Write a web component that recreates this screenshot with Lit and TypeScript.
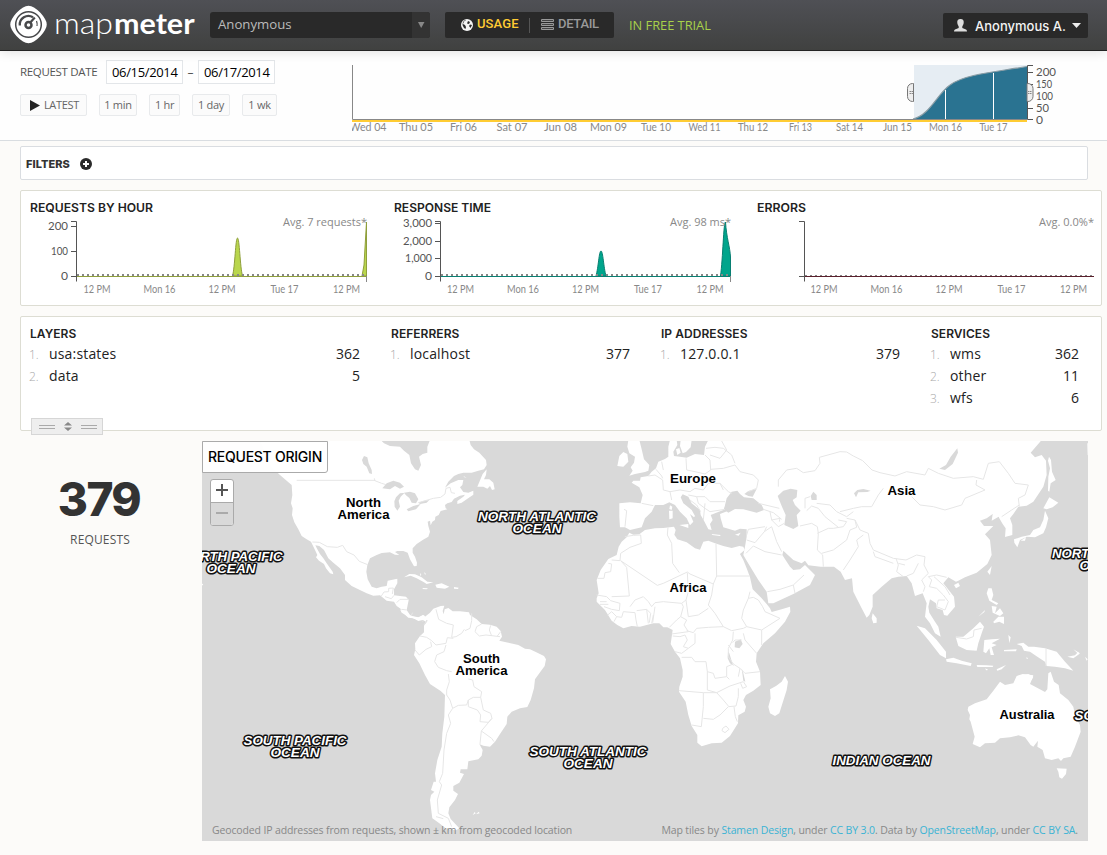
import { LitElement, html, svg, css } from "lit";
import { customElement } from "lit/decorators.js";

interface Tick { at: number; label: string; w: number }
interface Row { name: string; count: number }

const hourTicks: Tick[] = [
  { at: 97, label: "12 PM", w: 27 },
  { at: 159.5, label: "Mon 16", w: 32 },
  { at: 222, label: "12 PM", w: 27 },
  { at: 284.5, label: "Tue 17", w: 28 },
  { at: 346.5, label: "12 PM", w: 27 },
];

const dayTicks: Tick[] = [
  { at: 368, label: "Wed 04", w: 37 }, { at: 416, label: "Thu 05", w: 34 },
  { at: 463.5, label: "Fri 06", w: 27 }, { at: 512, label: "Sat 07", w: 31 },
  { at: 560.5, label: "Jun 08", w: 33 }, { at: 608.5, label: "Mon 09", w: 37 },
  { at: 656, label: "Tue 10", w: 30 }, { at: 704.5, label: "Wed 11", w: 32 },
  { at: 753, label: "Thu 12", w: 30 }, { at: 800.5, label: "Fri 13", w: 23 },
  { at: 849.5, label: "Sat 14", w: 27 }, { at: 897.5, label: "Jun 15", w: 29 },
  { at: 945.5, label: "Mon 16", w: 33 }, { at: 993.5, label: "Tue 17", w: 28 },
];

const lists: { title: string; cls: string; rows: Row[] }[] = [
  { title: "LAYERS", cls: "c1", rows: [{ name: "usa:states", count: 362 }, { name: "data", count: 5 }] },
  { title: "REFERRERS", cls: "c2", rows: [{ name: "localhost", count: 377 }] },
  { title: "IP ADDRESSES", cls: "c3", rows: [{ name: "127.0.0.1", count: 379 }] },
  { title: "SERVICES", cls: "c4", rows: [{ name: "wms", count: 362 }, { name: "other", count: 11 }, { name: "wfs", count: 6 }] },
];

/* ---- Geography. Each sheet is drawn in thirds of a pixel from its own origin. ---- */
const northAmerica = `M180 0L545 3L552 10L570 18L600 20L612 32L628 45L633 70L645 88L655 92L663 75L657 50L668 42L682 38L682 20L690 0
L808 0L812 15L822 28L838 38L858 60L860 75L852 88L835 92L815 98L790 98L775 102L762 108L745 125L735 143L752 130L775 120L790 120L787 135
L780 142L790 156L805 158L820 152L820 164L800 178L785 188L772 192L772 183L790 170L795 164L780 167L762 176L755 186L742 190L735 195L737 205L742 208L722 213
L716 225L706 230L705 240L697 245L692 256L690 242L683 245L685 258L690 275L685 290L668 300L650 312L638 325L638 338L645 350L651 368L650 378L642 379L630 358
L623 338L610 333L592 333L585 336L598 345L585 344L570 337L545 339L530 345L510 355L502 375L499 395L503 418L515 440L530 445L545 440L560 438L563 422L592 416
L592 430L582 448L582 466L600 468L618 470L626 480L620 510L632 528L655 533L668 525L680 533L678 545L668 540L655 543L640 535L625 533L605 515L604 508L590 498L582 485L560 482
L540 466L520 467L500 460L475 448L455 438L435 420L435 405L420 385L400 368L385 355L372 330L358 318L346 316L352 328L360 342L370 355L380 370L398 395L400 403L390 400
L378 385L372 372L357 362L348 352L352 345L345 330L333 305L320 298L305 288L295 268L283 247L276 225L278 205L273 190L277 165L275 135L260 122L240 105L215 82Z
M832 140L848 102L860 88L858 105L852 118L868 118L880 128L884 148L876 150L870 138L862 146L850 140Z M245 100L268 108L290 130L288 145L275 130L258 120Z
M612 412L628 402L645 403L665 412L682 425L700 427L680 432L672 427L650 415L632 407Z M706 434L725 430L748 440L735 446L710 443Z M668 444L684 445L680 448L668 447Z M762 441L776 443L774 447L762 446Z M0 425L10 434L4 438L0 437Z
M660 398L664 405L661 408Z M672 396L678 402L675 404Z M790 108L800 113L793 112Z`;
const lakes = `M547 145L560 130L580 122L600 128L612 140L600 146L585 138L570 148Z M588 172L600 160L614 158L602 170L596 182L600 200L592 212L584 200L583 184Z
M612 158L630 155L645 160L655 178L648 190L635 188L628 174L618 166Z M620 208L640 198L662 192L648 208L625 214Z M655 188L672 182L688 180L680 188L660 192Z
M486 60L492 48L502 52L506 70L515 90L516 102L508 100L500 80L490 72Z`;
const naBorders = `M290 121L522 121L545 130L558 134M523 115L525 123M655 188L700 175L722 172L735 162L738 145L750 142L754 158L765 160
M337 306L358 307L382 320L412 322L428 316L440 335L462 345L478 364L503 374M544 468L552 456L566 455L566 445L580 444M580 444L577 462M555 470L574 476L582 466M590 488L600 478L626 478M605 508L620 510M632 530L638 518M668 545L674 530`;

const southAmerica = `M82 64L75 50L90 38L100 26L122 18L133 17L128 33L131 43L134 28L145 24L158 34L180 34L207 37L210 45L230 58L245 72L270 74L290 80L302 93L306 110L298 122L325 128L355 135L375 146L390 148L412 158L432 168L438 178L434 198L418 220L405 238L402 265L392 300L382 321L360 325L335 335L322 350L320 372L300 402L285 425L270 440L250 437L238 432L248 450L245 467L235 478L205 484L202 508L182 508L180 518L192 522L178 548L160 558L160 572L174 582L165 600L148 622L145 640L152 657L178 685L168 691L140 687L118 670L97 655L95 640L90 600L93 585L103 575L93 570L101 545L108 545L105 520L112 480L125 440L127 400L133 350L135 285L122 273L90 252L75 225L58 190L42 165L46 148L45 130L60 108L72 97L72 77Z
M218 645L224 636L227 640Z M228 643L236 635L239 640Z M0 28L20 40L35 48L55 52L72 45L80 60L55 60L30 52L5 38Z`;
const saBorders = `M72 75L82 60M108 28L116 58L140 70L160 75L155 112L168 110L185 100L193 88M60 108L80 112L95 122L108 135L138 130L142 113L160 115M45 150L58 165L78 148L95 140L92 125M138 135L132 155L110 165L104 185L115 202L140 212L155 215M215 40L215 62L210 85L195 92M245 72L230 80L225 95L238 108L258 105L300 110M272 76L268 90L275 108M302 95L292 108
M145 222L148 245L140 270L140 285M140 285L150 300L158 325L145 345L152 370L140 400L132 450L128 520L118 545L125 555L112 600L115 640L145 655M158 325L175 316L200 315L205 300L220 292L242 292L245 275L222 260L218 240L205 237M205 300L205 320L232 330L242 345L240 365L265 367L276 355L272 340L250 330L242 292M276 355L244 393L240 432M244 393L275 415L282 425M108 650L130 656M145 655L155 680`;

const africa = `M148 278L160 284L178 283L195 270L225 265L250 264L282 260L287 270L283 284L292 298L320 307L345 325L360 329L370 305L385 302L405 310L430 318L455 324L478 318L490 320L494 330L480 342L490 360L500 385L510 412L518 448L530 460L545 475L560 492L570 505L575 516L605 508L630 500L631 515L615 545L585 580L550 610L530 640L528 665L540 695L542 735L520 752L498 765L490 780L498 800L494 815L475 826L474 850L450 888L425 908L395 910L365 919L352 908L352 885L335 858L325 825L317 785L297 755L298 740L308 710L308 690L300 655L285 635L272 612L278 570L262 562L250 562L238 550L220 550L180 560L155 558L130 565L112 555L95 542L75 510L50 485L50 475L56 460L50 420L62 390L85 357L110 345L116 320L125 305L140 292Z
M615 708L624 725L620 750L598 820L585 828L570 820L565 800L572 775L570 748L588 738L605 725Z`;
const africaBorders = `M135 290L160 286L182 285L184 310L150 322L122 340L120 362L95 360M85 370L95 372L92 395L75 398L72 415L52 415M122 362L232 436L250 430L322 396L330 402L400 432M122 362L140 382L148 468L95 470M264 262L262 285L275 310L278 370L298 398M408 312L410 408L508 408M410 408L400 432L395 465L385 495L405 520L430 560
M50 465L80 470L92 482L120 490L118 512L95 508L72 500M60 485L80 485M60 493L85 493M83 525L95 515L110 530L102 545M110 530L125 532L130 515L165 518L168 540L172 560M170 512L200 508L205 550M200 508L212 520L208 548M150 500L165 480L190 470L205 485L215 500L225 488L250 485L305 490L318 480L325 455L322 398M220 525L215 550M218 548L225 500M268 562L290 540L302 530L310 500L305 490M302 530L320 540L312 555L325 575L275 582M318 480L325 530L355 525L385 505M320 572L340 578L350 565L385 562L430 560L455 572L490 565L500 560L545 570L600 535L555 515L548 500L535 480L520 472L505 475L510 455M505 475L490 510L485 535L500 560M545 570L545 615M490 580L495 600L530 640
M278 588L300 590L315 585L322 600L310 620L325 625L345 610L345 580M285 635L305 640L325 625M305 652L335 652L345 665L378 665L382 695L400 700L405 715L440 710L440 680L460 672L445 650L445 625L458 600L460 575M382 695L382 750L410 758L450 738L490 725M297 752L370 758L410 758M370 758L370 800L364 860L335 855M370 835L400 838L420 825L445 800L468 798L475 770L475 745M410 758L430 780L445 798M462 800L466 830L472 845M428 865L438 858L447 868L435 878L426 872L428 865M440 710L448 718M460 672L480 685L495 700L540 695M480 685L475 710M458 608L465 600L485 600M445 615L460 635M490 725L500 740L488 745L482 730`;

const eurasia = `M118 190L150 187L182 190L188 165L178 142L155 128L160 122L180 122L182 112L205 108L215 95L228 85L235 65L255 57L265 50L265 20L270 0L290 0L292 15L280 35L282 48L300 50L320 53L345 42L372 45L375 20L385 0
L1385 0L1352 38L1365 52L1385 45L1398 62L1400 105L1390 140L1360 185L1340 197L1315 200L1300 222L1290 235L1297 255L1297 285L1275 291L1277 265L1268 252L1258 235L1256 230L1235 242L1238 222L1220 235L1200 242L1212 258L1240 258L1215 283L1230 300L1235 345L1222 372L1190 398L1155 412L1135 422L1128 425L1105 412L1090 430L1122 470L1125 500L1102 527L1092 525L1088 510L1070 505L1068 490L1050 478L1045 500L1048 518L1065 545L1075 560L1082 590L1065 580L1050 550L1035 530L1040 490L1028 460L1005 468L995 430L980 408L955 410L935 415L905 440L878 465L878 500L868 525L860 533L845 505L820 455L816 415L795 420L782 395L762 380L722 380L685 376L675 362L665 370L640 360L610 332L607 345L630 380L640 390L660 388L675 375L705 405L690 435L640 462L580 490L565 490L560 455L535 420L500 362L490 345L495 320L500 290L500 268L480 266L465 272L430 262L422 235L420 222L445 212L435 200L430 210L405 220L392 225L398 240L390 252L395 270L385 268L372 242L362 225L360 210L335 190L325 170L308 163L302 172L310 190L335 210L345 228L342 232L330 222L340 245L330 256L320 235L300 215L285 195L268 187L250 195L225 195L215 215L195 235L185 262L150 270L135 262L120 262L118 230Z
M298 255L325 252L325 264Z M267 212L278 212L278 235L268 238Z M270 196L277 200L275 210L268 207Z M395 282L422 285L420 288L397 285Z M465 284L482 278L476 287Z
M145 0L178 0L185 28L192 58L208 75L205 92L195 96L165 102L148 107L158 92L152 82L162 68L165 50L148 40L142 20Z M112 78L118 48L130 36L142 42L145 65L130 80Z M302 0L335 0L332 22L318 36L308 40L300 18Z M288 28L298 24L302 38L292 45Z`;
const seas = `M432 208L440 175L455 155L472 152L480 162L492 172L520 175L545 195L552 210L530 218L490 208L465 207L445 218Z M493 162L505 153L530 147L518 170L505 168Z
M593 168L610 152L632 146L652 150L650 172L638 180L645 195L662 212L650 225L655 258L640 267L613 255L617 225L605 198Z M692 168L700 155L710 165L710 180L695 180Z
M1132 25L1134 38L1118 72L1095 90L1078 86L1098 75L1112 50Z M822 160L832 150L850 147L872 152L862 156L835 157L828 172Z M465 605L482 598L488 612L478 625L464 622Z M444 635L448 640L457 670L462 678L450 670L443 655Z M485 685L490 700L496 725L490 722Z`;
const eurasiaBorders = `M132 208L140 212L135 260M185 190L220 197M205 108L225 105L248 120L250 150L270 155L275 180M228 88L245 108L248 115M245 65L250 90M318 55L320 90L345 95L375 102L392 90L390 60L375 45M270 155L300 150L330 155L345 145L370 150L385 130L420 130L445 155L455 160M392 88L430 85L465 75L480 95L520 105L535 120L530 145L505 155M378 25L405 22L430 25L455 45L465 70M390 45L420 55L440 30L425 3M325 165L350 170L355 190L375 205L390 215L435 208M350 170L375 170L390 185L435 185M420 130L430 150M330 180L350 195L362 215M375 190L370 240
M550 208L580 218L605 238M535 190L598 205M570 215L575 240L600 235L598 245M555 260L505 268L500 285M500 300L525 308L553 275L560 260M553 275L575 260L590 305L605 335M498 340L520 318L555 335L605 345M562 455L600 448L640 435L672 405M640 435L645 460M575 240L595 260L613 250
M595 140L595 120L620 90L650 85L670 98L705 92L720 70L718 52L780 35L800 36L820 48L848 62L876 90L900 98L945 108L980 95L1035 105L1045 85L1075 100L1120 115L1180 110L1210 118L1225 70L1258 65L1285 100L1305 130L1345 135L1335 165L1315 175L1318 200
M1190 120L1188 135L1215 150
M675 205L675 175L690 170M680 212L695 198L715 205L735 230L775 262M710 190L750 195L770 215L800 230L820 215M715 280L712 260L695 250L660 258M715 280L712 330L728 345L730 380M712 280L745 265L760 265L790 260L800 245L775 240M725 340L760 330L800 300L810 270L830 262L825 240L800 235M780 215L820 205L845 200L875 200L895 165L910 145M825 240L840 270L865 280L870 310L880 330L940 355L978 360L1010 345L1035 350L1032 375L1045 400L1025 420L1035 440L1030 455M790 390L810 360L835 320L830 300L850 285M880 335L885 350L940 370M948 355L955 375L950 395L970 410M975 375L955 370M980 408L1000 400L1015 370M1045 410L1070 405L1100 412M1045 410L1055 420L1048 440L1070 445L1090 465L1105 485L1095 510L1070 500L1075 480L1095 480M1062 410L1095 440L1110 465M995 170L1020 195L1060 200L1095 210L1145 195L1155 175L1215 150M1265 230L1295 210L1318 195`;
const eastIslands = `M747 50L753 60L756 95L767 120L752 130L748 155L744 152L745 110L750 85L744 62Z M730 205L748 172L775 188L758 202L740 208Z M735 212L745 235L738 262L730 280L705 292L680 290L660 300L652 322L643 308L642 298L665 290L690 285L700 270L720 262L730 240Z M662 302L678 292L675 302Z M562 395L575 378L570 405Z M462 435L475 428L480 438L468 445Z M218 520L230 535L230 548L220 550L215 535Z
M350 557L375 565L410 600L438 635L438 655L420 645L385 600Z M438 658L460 653L485 662L515 670L512 678L470 670L440 665Z M467 590L490 590L520 565L540 545L552 560L545 580L535 610L530 632L500 630L475 618Z M535 530L555 510L553 516Z M565 445L575 445L580 465L575 480L595 490L590 495L568 482L560 460Z M575 498L590 500L585 520L600 505L610 520L600 528L578 518Z M580 545L595 530L612 530L612 552L598 545L582 550Z M553 600L575 598L600 596L575 610L590 615L575 622L582 645L572 645L568 625L558 640L550 635Z M625 585L632 592L628 610Z M612 630L650 628L648 634L612 634Z M650 612L670 608L685 620L702 620L735 625L770 635L795 665L820 692L795 685L765 680L740 678L735 665L712 650L690 635L672 632L665 618Z M802 650L825 646L835 635L838 642L820 655Z M820 628L840 640L836 643Z M855 650L863 658L860 662Z M530 675L560 676L580 677L578 681L532 681Z M590 688L618 675L605 688L592 692Z M556 685L565 690L558 691Z M680 650L684 656L680 657Z M862 10L872 10L870 50L863 45Z`;
const islandBorders = `M468 592L500 597L520 590L522 570L545 565M738 626L738 678`;
const australia = `M505 170L525 160L560 148L580 122L600 95L615 105L640 100L650 78L668 72L700 76L695 90L690 102L735 126L742 118L745 70L752 65L762 95L776 105L780 130L805 150L820 170L826 200L840 225L842 245L825 290L812 320L790 325L783 333L775 325L755 330L735 325L728 300L712 290L714 272L700 290L692 285L675 262L655 256L630 262L600 265L585 278L555 280L540 292L518 282L524 260L512 215L508 208L510 195L503 180Z M770 355L800 356L798 372L786 386L778 382L775 365Z`;

@customElement("world-map")
class WorldMap extends LitElement {
  static styles = css`
    :host { display: block; width: 886px; height: 400px; }
    svg { display: block; background: #d9d9d9; }
    .land { fill: #fff; }
    .sea { fill: #d9d9d9; }
    .border { fill: none; stroke: #e6e6e6; stroke-width: 3; stroke-linejoin: round; }
    .place, .ocean { font: bold 13.5px "Liberation Sans", Arial, sans-serif; text-anchor: middle; }
    .place { fill: #000; stroke: #fff; stroke-width: 2px; paint-order: stroke; }
    .ocean { font-style: italic; fill: #fff; stroke: #111; stroke-width: 3px; paint-order: stroke; stroke-linejoin: round; }
  `;
  private label(cls: string, x: number, y: number, w: number, text: string) {
    return svg`<text class=${cls} x=${x} y=${y} textLength=${w} lengthAdjust="spacingAndGlyphs">${text}</text>`;
  }
  render() {
    return html`<svg width="886" height="400" viewBox="202 441 886 400">
      <g transform="translate(200 440) scale(.33333)">
        <path class="land" d=${northAmerica} /><path class="sea" d=${lakes} /><path class="border" d=${naBorders} />
      </g>
      <g transform="translate(400 600) scale(.33333)">
        <path class="land" d=${southAmerica} /><path class="border" d=${saBorders} />
      </g>
      <g transform="translate(580 440) scale(.33333)">
        <path class="land" d=${africa} /><path class="land" d=${eurasia} /><path class="sea" d=${seas} />
        <path class="border" d=${africaBorders} /><path class="border" d=${eurasiaBorders} />
      </g>
      <g transform="translate(800 440) scale(.33333)">
        <path class="land" d=${eastIslands} /><path class="border" d=${islandBorders} />
        <path class="land" d="M648 720L655 707L685 702L700 710L695 720Z" />
      </g>
      <g transform="translate(800 650) scale(.33333)"><path class="land" d=${australia} /></g>
      ${this.label("place", 363.5, 507, 35, "North")}
      ${this.label("place", 363.5, 518.5, 52, "America")}
      ${this.label("place", 693, 483, 46, "Europe")}
      ${this.label("place", 901.5, 494.5, 28, "Asia")}
      ${this.label("place", 688, 592, 37, "Africa")}
      ${this.label("place", 481.5, 663, 37, "South")}
      ${this.label("place", 481.5, 675, 52, "America")}
      ${this.label("place", 1027, 718.5, 55, "Australia")}
      ${this.label("ocean", 537, 520.5, 118, "NORTH ATLANTIC")}
      ${this.label("ocean", 537, 532.5, 49, "OCEAN")}
      ${this.label("ocean", 231.5, 561, 102, "NORTH PACIFIC")}
      ${this.label("ocean", 231, 573, 49, "OCEAN")}
      ${this.label("ocean", 1103, 558, 102, "NORTH PACIFIC")}
      ${this.label("ocean", 1104, 570, 49, "OCEAN")}
      ${this.label("ocean", 295, 745, 103, "SOUTH PACIFIC")}
      ${this.label("ocean", 295, 757, 49, "OCEAN")}
      ${this.label("ocean", 588, 756, 117, "SOUTH ATLANTIC")}
      ${this.label("ocean", 588, 768, 49, "OCEAN")}
      ${this.label("ocean", 881.5, 765, 98, "INDIAN OCEAN")}
      ${this.label("ocean", 1126, 720, 103, "SOUTH PACIFIC")}
    </svg>`;
  }
}

@customElement("app-root")
class AppRoot extends LitElement {
  static styles = css`
    :host { display: block; width: 1107px; height: 855px; overflow: hidden; background: #fcfbf9; color: #333; font-family: "Open Sans", "Noto Sans", sans-serif; }
    * { box-sizing: border-box; }
    svg { display: block; flex: none; }
    svg text { font-family: Lato, "Open Sans", sans-serif; }
    header { height: 51px; display: flex; align-items: flex-start; background: linear-gradient(#4f5055, #404140); border-bottom: 1px solid #222; position: relative; box-shadow: 0 2px 10px rgba(0,0,0,.11); }
    .logo { margin: 5px 0 0 9px; }
    .account { margin: 12px 0 0 14px; width: 220px; height: 26px; display: flex; border-radius: 3px; background: #292929; overflow: hidden; color: #bbb; font-size: 13.2px; line-height: 25px; }
    .account span { flex: 1; padding-left: 8px; }
    .account i { width: 18px; background: #333; display: grid; place-items: center; }
    .tabs { margin: 12px 0 0 15px; width: 169px; height: 26px; border-radius: 2px; background: #292929; display: flex; align-items: center; padding-left: 16px; color: #999; line-height: 25px; }
    .tabs b { font: 500 13px/24px Roboto, sans-serif; color: #fc3; width: 42px; margin: -2px 0 0 4px; letter-spacing: .1px; }
    .tabs em { width: 1px; height: 15px; background: #555; margin: 0 11px 0 10px; }
    .tabs u { font: 500 13px/24px Roboto, sans-serif; text-decoration: none; margin: -2px 0 0 4px; letter-spacing: -.3px; }
    .trial { margin: 17px 0 0 15px; font: 12.8px/17px "Open Sans"; color: #a8d14a; width: 84px; white-space: nowrap; }
    .user { margin: 13px 19px 0 auto; width: 145px; height: 25px; border-radius: 2px; background: #292929; display: flex; align-items: center; color: #f4f4f4; font: 500 13px/26px Inter, sans-serif; padding-left: 11px; white-space: nowrap; }
    .user span { width: 92px; margin: 0 5px 0 8px; }
    .range { height: 90px; background: #fefefe; border-bottom: 1px solid #d9dde1; display: flex; }
    .dates { width: 345px; padding: 9px 0 0 20px; }
    .line { display: flex; align-items: center; font-size: 12px; color: #555; }
    .line label { width: 86px; white-space: nowrap; font-size: 11.5px; letter-spacing: -.32px; padding-bottom: 1px; }
    .line input { width: 77px; height: 24px; border: 1px solid #e3e6e9; background: #fff; color: #000; font: 13px "Open Sans"; letter-spacing: -.35px; padding: 0 0 0 5px; }
    .line s { width: 15px; text-align: center; text-decoration: none; }
    .quick { display: flex; margin-top: 10px; font: 11px/20px "Open Sans"; color: #666; letter-spacing: -.3px; }
    .quick button { height: 22px; padding: 0; border: 1px solid #e8eaec; border-radius: 2px; background: #fbfbfb; color: inherit; font: inherit; letter-spacing: inherit; display: flex; align-items: center; justify-content: center; gap: 4px; }
    .quick .q0 { padding-left: 2px; }
    .q0 { width: 67px; margin-right: 12px; } .q1 { width: 38px; margin-right: 12px; } .q2 { width: 31px; margin-right: 12px; } .q3 { width: 38px; margin-right: 12px; } .q4 { width: 35px; }
    .filters { margin: 5px 0 0 20px; width: 1068px; height: 34px; border: 1px solid #dadde1; border-radius: 2px; background: #fff; display: flex; align-items: center; padding: 2px 0 0 5px; gap: 10px; font: 800 11px Inter, sans-serif; letter-spacing: .05px; }
    .panel { margin-left: 20px; width: 1082px; border: 1px solid #ddddd3; border-radius: 2px; background: #fff; }
    .charts { margin-top: 10px; height: 116px; display: flex; gap: 1px; }
    .tables { margin-top: 10px; height: 115px; position: relative; display: flex; }
    .col { padding: 10px 0 0 9px; }
    .c1 { width: 361px; padding-right: 22px; } .c2 { width: 270px; padding-right: 22px; } .c3 { width: 270px; padding-right: 22px; } .c4 { width: 179px; padding-right: 22px; }
    h3 { margin: 0; font: 600 12px/14px Inter, sans-serif; letter-spacing: .05px; color: #222; }
    .row { display: flex; height: 22px; line-height: 22px; font-size: 14px; color: #222; }
    .first { margin-top: 2px; }
    .row i { width: 19px; font: 300 12px/23px "Open Sans"; color: #aaa; margin-left: -1px; margin-right: 1px; }
    .row span { flex: 1; letter-spacing: .17px; }
    .grip { position: absolute; left: 10px; top: 101px; width: 72px; height: 17px; border: 1px solid #d6d6d6; background: #eee; }
    .bottom { display: flex; margin-top: 10px; }
    .total { width: 202px; padding: 35px 2px 0 0; text-align: center; font-size: 12px; color: #555; line-height: 16px; letter-spacing: .15px; }
    .total b { display: block; font: 800 46px/46px Inter, sans-serif; letter-spacing: -1.6px; color: #333; margin: 0 2px 10px 0; }
    .map { position: relative; width: 886px; height: 400px; }
    .title { position: absolute; left: 0; top: 0; width: 126px; height: 32px; border: 1px solid #aaa; border-radius: 0 0 3px 0; background: rgba(255,255,255,.97); color: #000; font: 500 14px/29px Inter, sans-serif; padding-left: 5px; white-space: nowrap; letter-spacing: -.25px; }
    .zoom { position: absolute; left: 8px; top: 38px; width: 24px; height: 47px; border: 1px solid #aaa; border-radius: 3px; background: #fff; overflow: hidden; }
    .in { height: 22px; }
    .out { height: 23px; border-top: 1px solid #aaa; background: #d9d9d9; }
    .credit { position: absolute; left: 10px; right: 10px; bottom: 3px; display: flex; justify-content: space-between; font-size: 10.5px; line-height: 15px; letter-spacing: -.14px; color: #888; white-space: nowrap; }
    .source { letter-spacing: -.12px; }
    .credit a { color: #39b3d4; }
    .axis { fill: none; stroke: #555; }
    .tick { font-size: 11px; fill: #888; text-anchor: middle; }
    .val { font-size: 11.5px; fill: #555; text-anchor: end; }
    .day { font-size: 11px; fill: #888; text-anchor: middle; }
    .scale { font-size: 11.5px; fill: #555; }
    svg .head { font: 600 12px Inter, sans-serif; fill: #222; }
    svg .avg { font: 11.5px "Open Sans"; fill: #888; }
    svg .mark { font-family: Lato, sans-serif; fill: #fff; }
    .dots { fill: none; stroke: #888; stroke-width: 2; stroke-dasharray: 2 3; }
  `;

  private text(cls: string, x: number, y: number, w: number, t: string) {
    return svg`<text class=${cls} x=${x} y=${y} textLength=${w} lengthAdjust="spacingAndGlyphs">${t}</text>`;
  }

  /** One hourly chart; x runs from the panel's left edge at 20, and dx nudges its lettering. */
  private chart(o: { title: string; tw: number; avg: string; aw: number; vals: [string, number, number][]; path: string; fill: string; line: string; dots: number; end: boolean; titleDx: number; dx: number }) {
    return html`<svg width="363" height="114" viewBox="21 191 363 114">
      ${this.text("head", 30 + o.titleDx, 212, o.tw, o.title)}
      <path d=${o.path} fill=${o.fill} stroke=${o.line} />
      <path class="axis" d="M71 221.5H76.5V281.5M71 276.5H76" />
      ${o.end ? svg`<path d="M366.500 276V282" stroke="#888" />` : ""}
      <path class="dots" d="M77 ${o.dots}H366" />
      <path d="M77 276.500H366" stroke=${o.line} />
      ${o.vals.map(([l, y, w]) => svg`<path class="axis" d="M71 ${y}H76" />${this.text("val", 68, y + 3.7, w, l)}`)}
      ${hourTicks.map((t) => this.text("tick", t.at + o.dx, 293, t.w, t.label))}
      ${this.text("avg", 367 - o.aw + o.titleDx, 226, o.aw, o.avg)}
    </svg>`;
  }

  private handle(x: number, left: boolean) {
    return svg`<path d=${left ? `M${x} 83.500h-1a5 5 0 0 0-5 5v8a5 5 0 0 0 5 5h1z` : `M${x} 83.500h1a5 5 0 0 1 5 5v8a5 5 0 0 1-5 5h-1z`} fill="#eee" stroke="#777" />
      <path d="M${left ? x - 4 : x + 1} 91.500h1.500M${left ? x - 2 : x + 3} 91.500h1.500M${left ? x - 4 : x + 1} 93.500h1.500M${left ? x - 2 : x + 3} 93.500h1.500" stroke="#888" />`;
  }

  render() {
    return html`
      <header>
        <svg class="logo" width="187" height="42" viewBox="9 5 187 42">
          <path d="M23 7.500Q28.500 4 34 7.500Q41 12 45 19Q48.500 24.500 45 30Q41 37 34 41.500Q28.500 45 23 41.500Q16 37 12 30Q8.500 24.500 12 19Q16 12 23 7.500Z" fill="#fff" />
          <circle cx="28.500" cy="24.500" r="12.800" fill="none" stroke="#48494b" stroke-width="1.500" />
          <path d="M19.800 25.500A8.700 8.700 0 0 1 33 17.200" fill="none" stroke="#48494b" stroke-width="2.300" />
          <path d="M36.500 21A8.700 8.700 0 0 1 37 26" fill="none" stroke="#48494b" stroke-width="1.200" />
          <path d="M28.500 24.500L34.800 17.500" stroke="#48494b" stroke-width="2.200" />
          <circle cx="28.500" cy="25" r="3" fill="#fff" stroke="#48494b" stroke-width="2.500" />
          <text class="mark" x="54" y="33.500" font-size="29" font-weight="300" textLength="59" lengthAdjust="spacingAndGlyphs">map</text>
          <text class="mark" x="114" y="33.500" font-size="29" font-weight="700" textLength="80.500" lengthAdjust="spacingAndGlyphs">meter</text>
        </svg>
        <div class="account"><span>Anonymous</span><i><svg width="7" height="6" viewBox="0 0 7 6"><path d="M0 0H6.500L3.200 6Z" fill="#888" /></svg></i></div>
        <div class="tabs">
          <svg width="12" height="12" viewBox="0 0 12 12"><circle cx="6" cy="6" r="6" fill="#f4f4f4" /><path d="M5 1L3 2.500L2 5L4 6L5 8L4.500 10L3 9L1.500 6L2 3L4 1ZM7 2L9 3L8 5L6 4.500ZM9 5.500L11 6L9.500 9L8 7Z" fill="#292929" /></svg>
          <b>USAGE</b><em></em>
          <svg width="13" height="12" viewBox="0 0 13 12"><path d="M.5 .5h12v2H.5zM.5 4.500h12v2H.5zM.5 8.500h12v2H.5z" fill="#444" stroke="#999" /></svg>
          <u>DETAIL</u>
        </div>
        <div class="trial">IN FREE TRIAL</div>
        <div class="user">
          <svg width="13" height="13" viewBox="0 0 13 13"><path d="M6.500 0C9 0 10 1.500 9.700 4C9.500 5.700 8.700 6.500 8.300 7.500V9L12 10.500Q13 11 13 12.500H0Q0 11 1 10.500L4.700 9V7.500C4.300 6.500 3.500 5.700 3.300 4C3 1.500 4 0 6.500 0Z" fill="#ddd" /></svg>
          <span>Anonymous A.</span>
          <svg width="9" height="5" viewBox="0 0 9 5"><path d="M0 0H9L4.500 5Z" fill="#eee" /></svg>
        </div>
      </header>

      <section class="range">
        <div class="dates">
          <div class="line"><label>REQUEST DATE</label><input .value=${"06/15/2014"} /><s>–</s><input .value=${"06/17/2014"} /></div>
          <div class="quick">
            <button class="q0"><svg width="10" height="11" viewBox="0 0 10 11"><path d="M0 0L10 5.500L0 11Z" fill="#222" /></svg>LATEST</button>
            <button class="q1">1 min</button><button class="q2">1 hr</button><button class="q3">1 day</button><button class="q4">1 wk</button>
          </div>
        </div>
        <svg width="762" height="88" viewBox="345 51 762 88">
          <defs><clipPath id="plot"><rect x="352" y="51" width="755" height="88" /></clipPath></defs>
          <rect x="914" y="65" width="114" height="54" fill="#e6edf3" />
          <path d="M913 119C930 115 937 94 950 85C965 74 995 72 1027 66.500V119Z" fill="#2a7391" />
          <path d="M913 119C930 115 937 94 950 85C965 74 995 72 1027 66.500" fill="none" stroke="#8a9da5" stroke-width="1.200" />
          <path d="M945.500 90V119M993.500 73V119" stroke="#fff" />
          <path d="M352.500 65V119.500H1027" fill="none" stroke="#888" />
          <path d="M352 121H1027" stroke="#fc3" stroke-width="2" />
          <path class="axis" d="M1033 65.500H1027.500V119.500H1033M1028 72.500H1033M1028 84.500H1033M1028 96.500H1033M1028 108.500H1033" />
          ${this.handle(913.5, true)}${this.handle(1027, false)}
          <g clip-path="url(#plot)">${dayTicks.map((t) => this.text("day", t.at, 131, t.w, t.label))}</g>
          ${this.text("scale", 1036, 76, 20, "200")}${this.text("scale", 1036, 88, 16, "150")}
          ${this.text("scale", 1036, 100, 17, "100")}${this.text("scale", 1036, 112, 13, "50")}${this.text("scale", 1036, 124, 7, "0")}
        </svg>
      </section>

      <div class="filters">FILTERS
        <svg width="12" height="12" viewBox="0 0 12 12"><circle cx="6" cy="6" r="6" fill="#2b2b2b" /><path d="M6 3V9M3 6H9" stroke="#fff" stroke-width="2" /></svg>
      </div>

      <section class="panel charts">
        ${this.chart({ title: "REQUESTS BY HOUR", tw: 123, avg: "Avg. 7 requests*", aw: 84, fill: "#b9d64d", line: "#8f9f3c", dots: 275, end: true, titleDx: 0, dx: 0,
          vals: [["200", 226.5, 20], ["100", 251.5, 17], ["0", 276.5, 7]],
          path: "M232.500 276C235 267 235.500 238 237.500 238C239.500 238 240 267 242.500 276ZM362 276L364 265L366.500 222V276Z" })}
        ${this.chart({ title: "RESPONSE TIME", tw: 97, avg: "Avg. 98 ms*", aw: 61, fill: "#00a58c", line: "#087f72", dots: 275, end: true, titleDx: 0, dx: -0.5,
          vals: [["3,000", 223.5, 29], ["2,000", 241.5, 29], ["1,000", 258.5, 27], ["0", 276.5, 7]],
          path: "M232 276C234.500 267 235 251 237 251C239 251 239.500 267 242 276ZM356.500 276C359 258 359.500 222 361.500 222C362.500 238 366 247 366.500 257V276Z" })}
        ${this.chart({ title: "ERRORS", tw: 49, avg: "Avg. 0.0%*", aw: 55, fill: "none", line: "#5a1f2b", dots: 276, end: false, titleDx: -1, dx: -1, vals: [], path: "" })}
      </section>

      <section class="panel tables">
        ${lists.map((l) => html`<div class="col ${l.cls}"><h3>${l.title}</h3>
          ${l.rows.map((r, i) => html`<div class="row ${i ? "" : "first"}"><i>${i + 1}.</i><span>${r.name}</span>${r.count}</div>`)}</div>`)}
        <div class="grip"><svg width="70" height="15" viewBox="0 0 70 15"><path d="M7 6.500h16M7 9.500h16M49 6.500h16M49 9.500h16" stroke="#aaa" /><path d="M32 6.500h8L36 3zM32 8.500h8L36 12z" fill="#888" /></svg></div>
      </section>

      <section class="bottom">
        <div class="total"><b>379</b>REQUESTS</div>
        <div class="map">
          <world-map></world-map>
          <div class="title">REQUEST ORIGIN</div>
          <div class="zoom">
            <div class="in"><svg width="22" height="22" viewBox="0 0 22 22"><path d="M11 4V16M5 10H17" stroke="#555" stroke-width="2" /></svg></div>
            <div class="out"><svg width="22" height="21" viewBox="0 0 22 21"><path d="M5 10H17" stroke="#aaa" stroke-width="2" /></svg></div>
          </div>
          <div class="credit"><span>Geocoded IP addresses from requests, shown ± km from geocoded location</span>
            <span class="source">Map tiles by <a>Stamen Design</a>, under <a>CC BY 3.0</a>. Data by <a>OpenStreetMap</a>, under <a>CC BY SA</a>.</span></div>
        </div>
      </section>
    `;
  }
}
